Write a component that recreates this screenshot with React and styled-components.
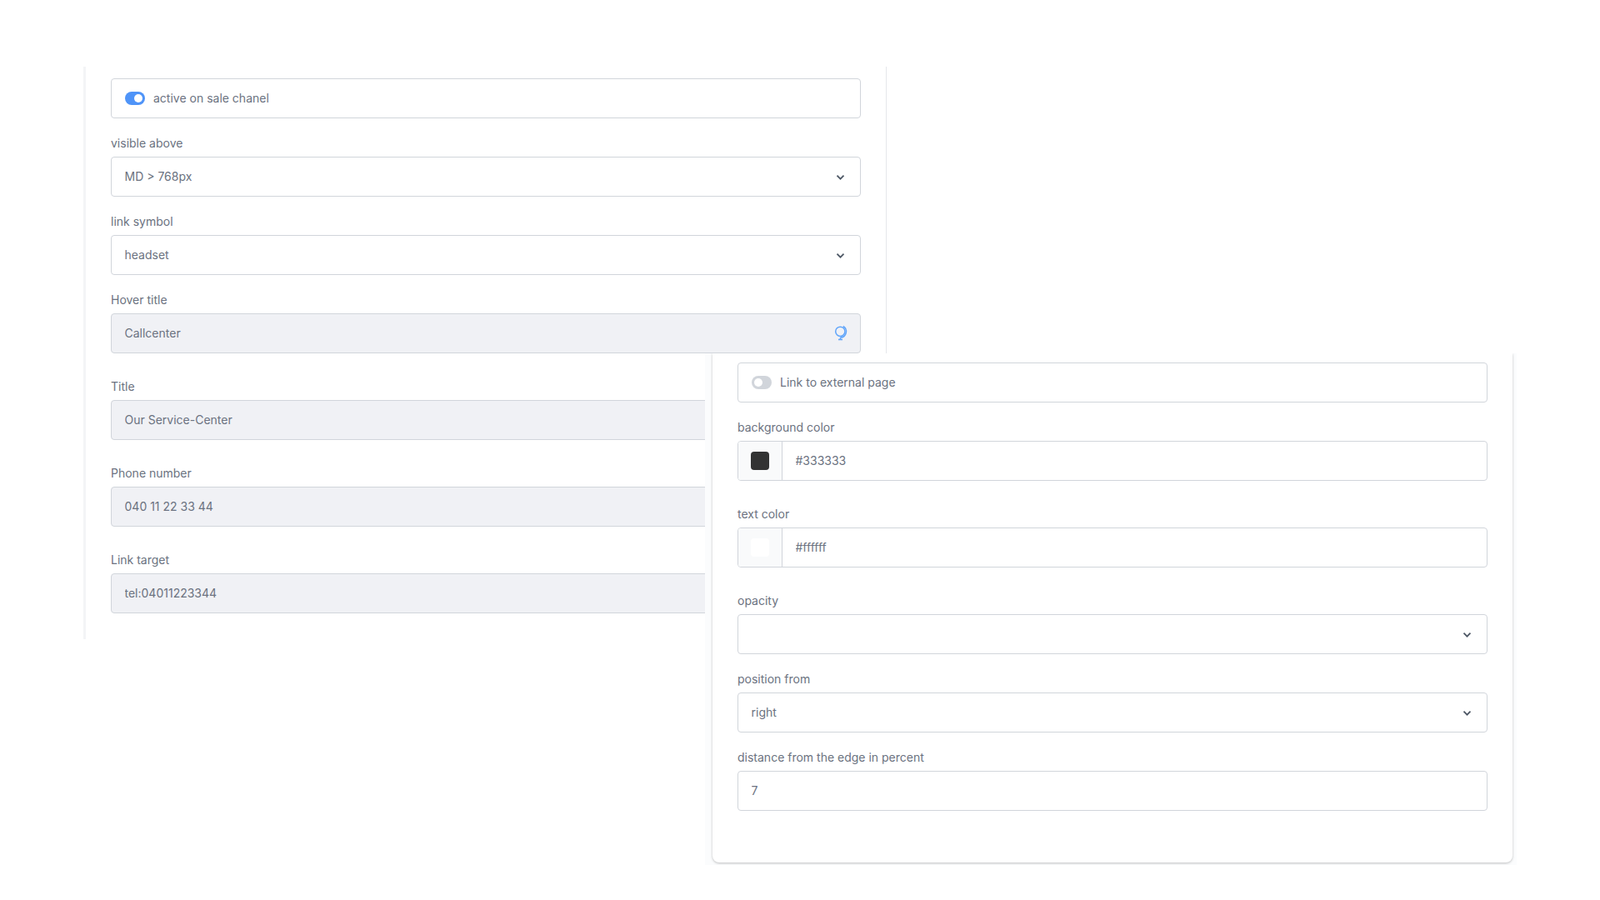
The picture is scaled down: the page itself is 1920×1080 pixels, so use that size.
import React from 'react'
import styled, {createGlobalStyle} from 'styled-components'

const GlobalStyle = createGlobalStyle`
    * {
        box-sizing: border-box;
    }
    body {
        margin: 0;
        background: #fff;
        font-family: Inter, 'Liberation Sans', sans-serif;
        font-size: 14px;
        color: #6b7280;
    }
`
const Page = styled.div`
    position: relative;
    width: 1920px;
    height: 1080px;
    overflow: hidden;
    padding: 80px 0 0 100px;
`
const LeftColumn = styled.div`
    width: 964px;
    height: 687px;
    border-left: 3px solid #f3f4f6;
`
const TopSection = styled.div`
    height: 344px;
    padding: 14px 30px 0 30px;
    border-right: 1px solid #e5e7eb;
`
const BottomSection = styled.div`
    padding: 0 31px 0 30px;
`
const Group = styled.div`
    margin-top: ${p => (p.$loose ? 30 : 20)}px;
`
const Label = styled.label`
    display: block;
    height: 20px;
    margin-bottom: 6px;
    line-height: 20px;
    color: #6b7280;
`
const ToggleBox = styled.div`
    display: flex;
    align-items: center;
    gap: 10px;
    height: 48px;
    padding: 0 16px;
    border: 1px solid #d1d5db;
    border-radius: 4px;
    background: #fff;
    line-height: 20px;
`
const Toggle = styled.span`
    display: flex;
    align-items: center;
    justify-content: ${p => (p.$on ? 'flex-end' : 'flex-start')};
    width: 24px;
    height: 16px;
    padding: 3px;
    border-radius: 8px;
    background: ${p => (p.$on ? '#4f94f8' : '#d1d5db')};

    &::after {
        content: '';
        width: 10px;
        height: 10px;
        border-radius: 50%;
        background: #fff;
    }
`
const FieldWrap = styled.div`
    position: relative;
`
const Input = styled.input`
    display: block;
    width: 100%;
    height: 48px;
    padding: 0 16px 2px 15.5px;
    border: 1px solid #d1d5db;
    border-radius: 4px;
    outline: none;
    background: ${p => (p.$filled ? '#f0f1f5' : '#fff')};
    color: #6b7280;
    font: inherit;
`
const Select = styled.select`
    display: block;
    width: 100%;
    height: 48px;
    padding: 0 40px 2px 15.5px;
    border: 1px solid #d1d5db;
    border-radius: 4px;
    outline: none;
    appearance: none;
    background: #fff;
    color: #6b7280;
    font: inherit;
`
const FieldIcon = styled.span`
    position: absolute;
    top: 0;
    right: 14px;
    display: flex;
    align-items: center;
    justify-content: center;
    width: 20px;
    height: 48px;
    color: ${p => p.$color || '#4b5563'};
    pointer-events: none;
`
const ColorField = styled.div`
    display: flex;
    height: 48px;
    border: 1px solid #d1d5db;
    border-radius: 4px;
    background: #fff;
    overflow: hidden;
`
const ColorAddon = styled.div`
    display: flex;
    align-items: center;
    justify-content: center;
    flex: 0 0 53px;
    border-right: 1px solid #d1d5db;
    background: #f9fafb;
`
const Swatch = styled.span`
    width: 22px;
    height: 22px;
    border-radius: 4px;
    background: ${p => p.$color};
`
const ColorValue = styled.input`
    flex: 1;
    padding: 0 16px 2px 15.5px;
    border: 0;
    outline: none;
    background: transparent;
    color: #6b7280;
    font: inherit;
`
const OverlayClip = styled.div`
    position: absolute;
    left: 846px;
    top: 424px;
    width: 974px;
    height: 614px;
    padding: 0 5px 0 9px;
    overflow: hidden;
    background: #fbfcfd;
`
const Panel = styled.div`
    width: 960px;
    height: 611px;
    padding: 11px 30px 0;
    border-radius: 0 0 8px 8px;
    background: #fff;
    box-shadow: 0 1px 3px rgba(0, 0, 0, .25);
`

const Chevron = () => (
    <FieldIcon>
        <svg width="20" height="20" viewBox="0 0 20 20" fill="none">
            <path d="M5.5 8.7l4 4 4-4" stroke="currentColor" strokeWidth="1.7"/>
        </svg>
    </FieldIcon>
)

const GlobeIcon = () => (
    <FieldIcon $color="#60a5fa">
        <svg width="20" height="20" viewBox="0 0 20 20" fill="none" stroke="currentColor" strokeWidth="1.5">
            <circle cx="9.3" cy="7.8" r="5.6"/>
            <path d="M12.8 1.5A7.3 7.3 0 0 1 9.5 15.1"/>
            <path d="M9.5 15V17.2M7 17.4H12"/>
        </svg>
    </FieldIcon>
)

const SelectField = ({label, value, loose}) => (
    <Group $loose={loose}>
        <Label>{label}</Label>
        <FieldWrap>
            <Select defaultValue={value}>
                <option value={value}>{value}</option>
            </Select>
            <Chevron/>
        </FieldWrap>
    </Group>
)

const TextField = ({label, value, filled, loose, icon}) => (
    <Group $loose={loose}>
        <Label>{label}</Label>
        <FieldWrap>
            <Input readOnly defaultValue={value} $filled={filled}/>
            {icon}
        </FieldWrap>
    </Group>
)

const ColorInput = ({label, color, loose}) => (
    <Group $loose={loose}>
        <Label>{label}</Label>
        <ColorField>
            <ColorAddon>
                <Swatch $color={color}/>
            </ColorAddon>
            <ColorValue readOnly defaultValue={color}/>
        </ColorField>
    </Group>
)

export default function App() {
    return (
        <>
            <GlobalStyle/>
            <Page>
                <LeftColumn>
                    <TopSection>
                        <ToggleBox>
                            <Toggle $on/>
                            active on sale chanel
                        </ToggleBox>
                        <SelectField label="visible above" value="MD > 768px"/>
                        <SelectField label="link symbol" value="headset"/>
                        <TextField label="Hover title" value="Callcenter" filled icon={<GlobeIcon/>}/>
                    </TopSection>
                    <BottomSection>
                        <TextField loose filled label="Title" value="Our Service-Center"/>
                        <TextField loose filled label="Phone number" value="040 11 22 33 44"/>
                        <TextField loose filled label="Link target" value="tel:04011223344"/>
                    </BottomSection>
                </LeftColumn>

                <OverlayClip>
                    <Panel>
                        <ToggleBox>
                            <Toggle/>
                            Link to external page
                        </ToggleBox>
                        <ColorInput label="background color" color="#333333"/>
                        <ColorInput loose label="text color" color="#ffffff"/>
                        <SelectField loose label="opacity" value=""/>
                        <SelectField label="position from" value="right"/>
                        <TextField label="distance from the edge in percent" value="7"/>
                    </Panel>
                </OverlayClip>
            </Page>
        </>
    )
}
